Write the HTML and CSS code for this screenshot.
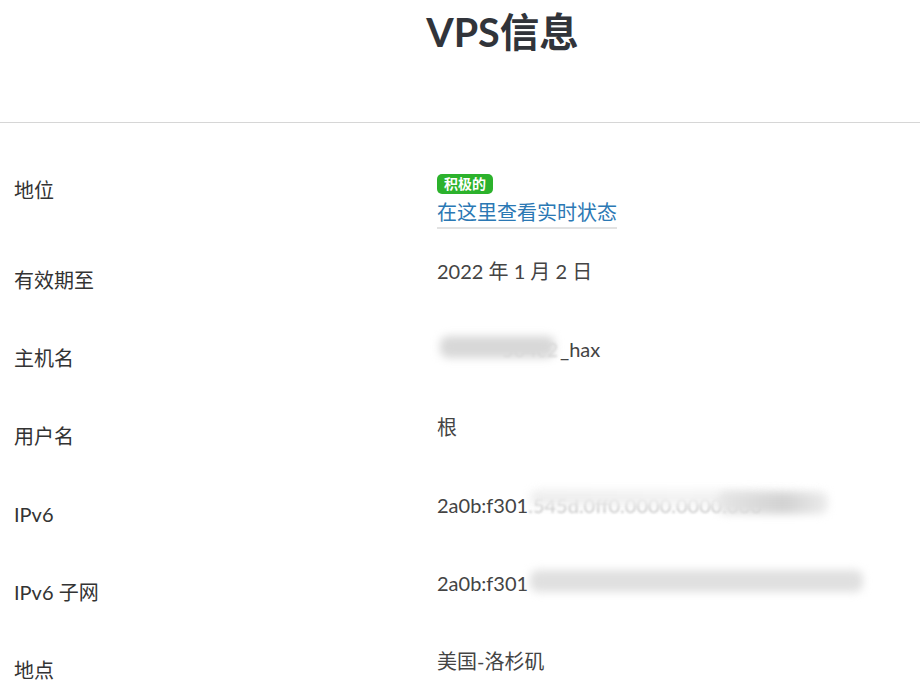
FILE: index.html
```html
<!DOCTYPE html>
<html lang="zh-CN">
<head>
<meta charset="utf-8">
<title>VPS信息</title>
<link rel="stylesheet" href="styles.css">
</head>
<body>
<header class="page-header">
  <h1 class="title">VPS信息</h1>
</header>
<main class="info">
  <div class="row row-status">
    <div class="label">地位</div>
    <div class="value">
      <span class="badge">积极的</span>
      <a class="live-link" href="#">在这里查看实时状态</a>
    </div>
  </div>
  <div class="row">
    <div class="label">有效期至</div>
    <div class="value">2022 年 1 月 2 日</div>
  </div>
  <div class="row">
    <div class="label">主机名</div>
    <div class="value"><span class="masked masked-host"><span class="ghost ghost-host">504c2</span><span class="smudge smudge-host"></span></span>_hax</div>
  </div>
  <div class="row">
    <div class="label">用户名</div>
    <div class="value">根</div>
  </div>
  <div class="row">
    <div class="label">IPv6</div>
    <div class="value">2a0b:f301<span class="masked masked-ip"><span class="ghost ghost-ip">.545d.0ff0.0000.0000.000</span><span class="smudge smudge-ip"></span><span class="smudge smudge-ip-end"></span></span></div>
  </div>
  <div class="row">
    <div class="label">IPv6 子网</div>
    <div class="value">2a0b:f301<span class="masked masked-net"><span class="smudge smudge-net"></span></span></div>
  </div>
  <div class="row">
    <div class="label">地点</div>
    <div class="value">美国-洛杉矶</div>
  </div>
</main>
</body>
</html>
```

FILE: styles.css
```css
body {
  margin: 0;
  background: #ffffff;
  font-family: Lato, "Noto Sans CJK SC", sans-serif;
  color: #3a3a3a;
  overflow: hidden;
}

.page-header {
  height: 122px;
  border-bottom: 1px solid #d6d6d6;
}

.title {
  margin: 0;
  padding: 9px 0 0 85px;
  text-align: center;
  font-size: 39.5px;
  line-height: 46px;
  font-weight: 700;
  color: #31343a;
}

.info {
  padding: 43px 0 0 14px;
}

.row {
  display: grid;
  grid-template-columns: 423px 1fr;
  align-items: start;
  padding-bottom: 39px;
  font-size: 20px;
  line-height: 30px;
}

.label {
  margin-top: 9px;
  color: #333333;
}

.value {
  color: #444444;
  white-space: nowrap;
}

.row-status .value {
  display: flex;
  flex-direction: column;
  align-items: flex-start;
  padding-top: 8px;
  margin-bottom: -12px;
}

.badge {
  font-size: 14px;
  line-height: 20px;
  padding: 0 7px;
  border-radius: 5px;
  background: #2cb22c;
  color: #ffffff;
  font-weight: 700;
}

.live-link {
  margin-top: 3px;
  color: #2b78b4;
  text-decoration: none;
  border-bottom: 2px solid #e2e2e2;
}

.masked {
  position: relative;
  display: inline-block;
  vertical-align: top;
  height: 30px;
}

.masked-host {
  width: 123px;
}

.masked-ip {
  width: 300px;
}

.masked-net {
  width: 335px;
}

.ghost {
  color: #c4c4c4;
  filter: blur(0.8px);
}

.ghost-host {
  position: absolute;
  right: 2px;
  top: 0;
  color: #d6d6d6;
}

.smudge {
  position: absolute;
  top: 2px;
  height: 22px;
  background: #dadada;
  border-radius: 8px;
  filter: blur(4px);
}

.smudge-host {
  left: 3px;
  width: 115px;
  background: #d8d8d8;
}

.smudge-ip {
  left: 2px;
  right: 0;
  top: 0;
  height: 16px;
  background: linear-gradient(90deg, #ececec 0%, #f2f2f2 50%, #f0f0f0 70%, transparent 100%);
  opacity: 0.9;
}

.smudge-ip-end {
  left: 190px;
  width: 110px;
  background: linear-gradient(90deg, #e6e6e6 0%, #d2d2d2 60%, #ececec 100%);
}

.smudge-net {
  left: 2px;
  right: 0;
  background: #e0e0e0;
}
```
